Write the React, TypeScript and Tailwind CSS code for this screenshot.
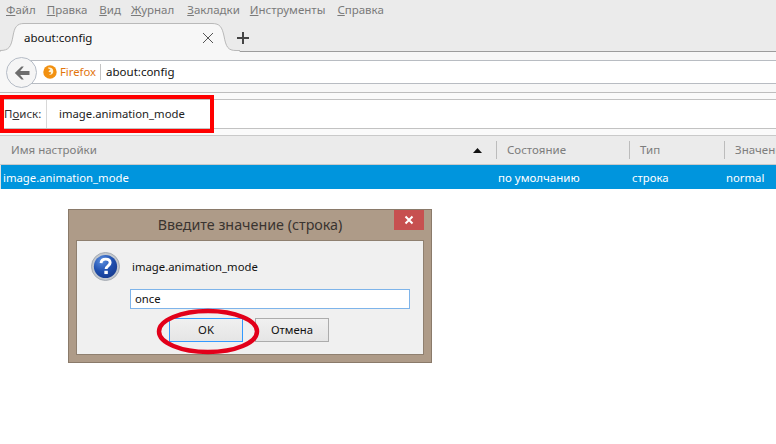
const menuItems = [
  { key: 'Ф', rest: 'айл', cls: 'ml-[6px]' },
  { key: 'П', rest: 'равка', cls: 'ml-[11px]' },
  { key: 'В', rest: 'ид', cls: 'ml-[12px]' },
  { key: 'Ж', rest: 'урнал', cls: 'ml-[10px]' },
  { key: 'З', rest: 'акладки', cls: 'ml-[13px]' },
  { key: 'И', rest: 'нструменты', cls: 'ml-[10px]' },
  { key: 'С', rest: 'правка', cls: 'ml-[12px]' }
]

const FirefoxIcon = () => (
  <svg width="14" height="14" viewBox="0 0 15 15" className="shrink-0">
    <circle cx="7.5" cy="7.5" r="7.2" fill="#f29111" />
    <path d="M5 3.2 C7 2.2 10.6 3 11 6.4 C11.3 9.4 8.6 11.2 6.2 10.2 C8 10.2 9 9 8.6 7.8 L6 7.6 C6 6.2 7.2 5.8 8 5.2 C7 4.2 6 4 5 3.2 Z" fill="#fff3d6" />
  </svg>
)

const QuestionIcon = () => (
  <svg width="29" height="29" viewBox="0 0 30 30" className="shrink-0">
    <defs>
      <radialGradient id="qblue" cx="35%" cy="25%" r="85%">
        <stop offset="0%" stopColor="#5b8fe0" />
        <stop offset="55%" stopColor="#1f4fae" />
        <stop offset="100%" stopColor="#16398c" />
      </radialGradient>
    </defs>
    <circle cx="15" cy="15" r="14.5" fill="#c3c8cf" stroke="#9aa0a8" strokeWidth="0.8" />
    <circle cx="15" cy="15" r="12" fill="url(#qblue)" />
    <path d="M10.4 11.6 C10.6 8.6 12.6 7.4 15.2 7.4 C18 7.4 19.8 9 19.8 11.2 C19.8 14.2 15.6 14.4 15.6 17.6" fill="none" stroke="#fff" strokeWidth="3" />
    <rect x="13.8" y="19.4" width="3.6" height="3.4" fill="#fff" />
  </svg>
)

export default function App() {
  return (
    <div
      className="relative w-[776px] h-[444px] overflow-hidden bg-white text-[11.3px] leading-none text-black"
      style={{ fontFamily: '"Noto Sans", "Open Sans", sans-serif' }}>
      {/* menu bar */}
      <div className="flex items-center h-[22px] pb-[2px] bg-[#ebebeb] text-[#7a7a7a] text-[11.5px]">
        {menuItems.map((m) => (
          <span key={m.key} className={m.cls}>
            <u>{m.key}</u>
            {m.rest}
          </span>
        ))}
      </div>

      {/* tab strip */}
      <div className="relative h-[30px] bg-[#ebebeb] border-b border-[#9c9c9c]">
        <svg width="240" height="30" viewBox="0 0 240 30" className="absolute left-0 top-0">
          <path
            d="M0 28.5 C9 28.5 11 25 13 14 C14.5 5 17 1.5 24 1.5 L212 1.5 C220 1.5 222 5 224 14 C226 25 228 28.5 236 28.5 L240 28.5 L240 32 L0 32 Z"
            fill="#f7f7f7"
            stroke="#b9b9b9"
          />
        </svg>
        <div className="absolute left-[24px] top-[10px] text-[11.5px] text-[#111]">about:config</div>
        <svg width="12" height="12" viewBox="0 0 12 12" className="absolute left-[202px] top-[10px]">
          <path d="M1 1 L11 11 M11 1 L1 11" stroke="#555" strokeWidth="1" />
        </svg>
        <svg width="12" height="12" viewBox="0 0 12 12" className="absolute left-[237px] top-[10px]">
          <path d="M6 0 V12 M0 6 H12" stroke="#444" strokeWidth="2" />
        </svg>
      </div>

      {/* nav toolbar */}
      <div className="relative flex items-center h-[41px] bg-[#f7f7f7] border-b border-[#bdbdbd] pl-[26px]">
        <div className="flex items-center h-[24px] flex-1 bg-white border-y border-[#b8bcc2] pl-[17px]">
          <FirefoxIcon />
          <span className="ml-[3px] text-[#e2750c]">Firefox</span>
          <span className="ml-[4px] h-[16px] w-px bg-[#c4c4c4]" />
          <span className="ml-[5px] text-[11.5px] text-[#111]">about:config</span>
        </div>
        <div className="absolute left-[6px] top-[5px] flex items-center justify-center w-[31px] h-[31px] rounded-full bg-[#f5f5f5] border border-[#b5bcc6]">
          <svg width="16" height="14" viewBox="0 0 16 14">
            <path d="M7.5 0.5 L0.8 7 L7.5 13.5 L9.8 13.5 L6.2 9 L15.5 9 L15.5 5 L6.2 5 L9.8 0.5 Z" fill="#6d6d6d" />
          </svg>
        </div>
      </div>

      {/* search */}
      <div className="h-[6px] bg-[#fafafa] border-b border-[#c2c2c2] box-content" />
      <div className="flex items-center h-[28px] bg-white border-b border-[#c2c2c2] box-content">
        <span className="ml-[4px] w-[42px] text-[11.5px] text-[#333]">
          П<u>о</u>иск:
        </span>
        <div className="flex items-center w-[164px] h-[28px] pl-[12px] border-l border-[#d8d8d8] text-[#222]">
          image.animation_mode
        </div>
      </div>
      <div className="h-[6px] bg-[#fafafa]" />

      {/* tree header */}
      <div className="flex items-center h-[30px] bg-[#ebebeb] border-y border-[#c9c9c9] text-[11.5px] text-[#7d7d7d]">
        <div className="flex items-center justify-between shrink-0 w-[496px] pl-[11px] pr-[14px]">
          <span>Имя настройки</span>
          <svg width="9" height="5" viewBox="0 0 9 5">
            <path d="M4.5 0 L9 5 L0 5 Z" fill="#111" />
          </svg>
        </div>
        <div className="flex items-center shrink-0 w-[133px] h-[18px] pl-[10px] border-l border-[#bcbcbc]">Состояние</div>
        <div className="flex items-center shrink-0 w-[95px] h-[18px] pl-[10px] border-l border-[#bcbcbc]">Тип</div>
        <div className="flex items-center shrink-0 h-[18px] pl-[10px] border-l border-[#bcbcbc] whitespace-nowrap">Значение</div>
      </div>

      {/* selected row */}
      <div className="flex items-center h-[24px] pt-[1px] bg-[#0095dd] text-white border-l border-[#e0e0e0]">
        <span className="shrink-0 w-[497px] pl-[2px]">image.animation_mode</span>
        <span className="shrink-0 w-[134px] text-[11.5px]">по умолчанию</span>
        <span className="shrink-0 w-[94px]">строка</span>
        <span>normal</span>
      </div>

      {/* prompt dialog */}
      <div className="absolute left-[68px] top-[209px] w-[364px] h-[154px] bg-[#ae9b88] border border-[#8a7a6a] flex flex-col">
        <div className="relative h-[30px] shrink-0 flex items-center justify-center text-[14.3px] text-[#3a3430]">
          Введите значение (строка)
          <div className="absolute right-[7px] top-0 w-[30px] h-[20px] bg-[#c75050] flex items-center justify-center">
            <svg width="10" height="10" viewBox="0 0 10 10">
              <path d="M1.5 1.5 L8.5 8.5 M8.5 1.5 L1.5 8.5" stroke="#fff" strokeWidth="2" />
            </svg>
          </div>
        </div>
        <div className="mx-[7px] h-[115px] bg-[#f0f0f0] border border-[#8f8070] flex flex-col">
          <div className="flex items-center mt-[11px] ml-[14px]">
            <QuestionIcon />
            <span className="ml-[12px] mt-[1px] text-[#111]">image.animation_mode</span>
          </div>
          <div className="mt-[8px] ml-[53px] w-[280px] h-[20px] bg-white border border-[#7eb4ea] flex items-center pl-[4px] text-[#111]">
            once
          </div>
          <div className="mt-[9px] ml-[92px] flex gap-[12px]">
            <div className="w-[74px] h-[24px] flex items-center justify-center bg-gradient-to-b from-[#f0f0f0] to-[#e5e5e5] border border-[#3399ff] text-[#111]">
              OK
            </div>
            <div className="w-[74px] h-[24px] flex items-center justify-center bg-gradient-to-b from-[#f0f0f0] to-[#e5e5e5] border border-[#acacac] text-[#111]">
              Отмена
            </div>
          </div>
        </div>
      </div>

      {/* red annotations */}
      <div className="absolute left-0 top-[95px] w-[214px] h-[38px] border-[4px] border-[#ff0000]" />
      <svg width="110" height="50" viewBox="0 0 110 50" className="absolute left-[154px] top-[308px]">
        <ellipse cx="54" cy="23.5" rx="49" ry="20.5" fill="none" stroke="#e2001a" strokeWidth="4.5" />
      </svg>
    </div>
  )
}
